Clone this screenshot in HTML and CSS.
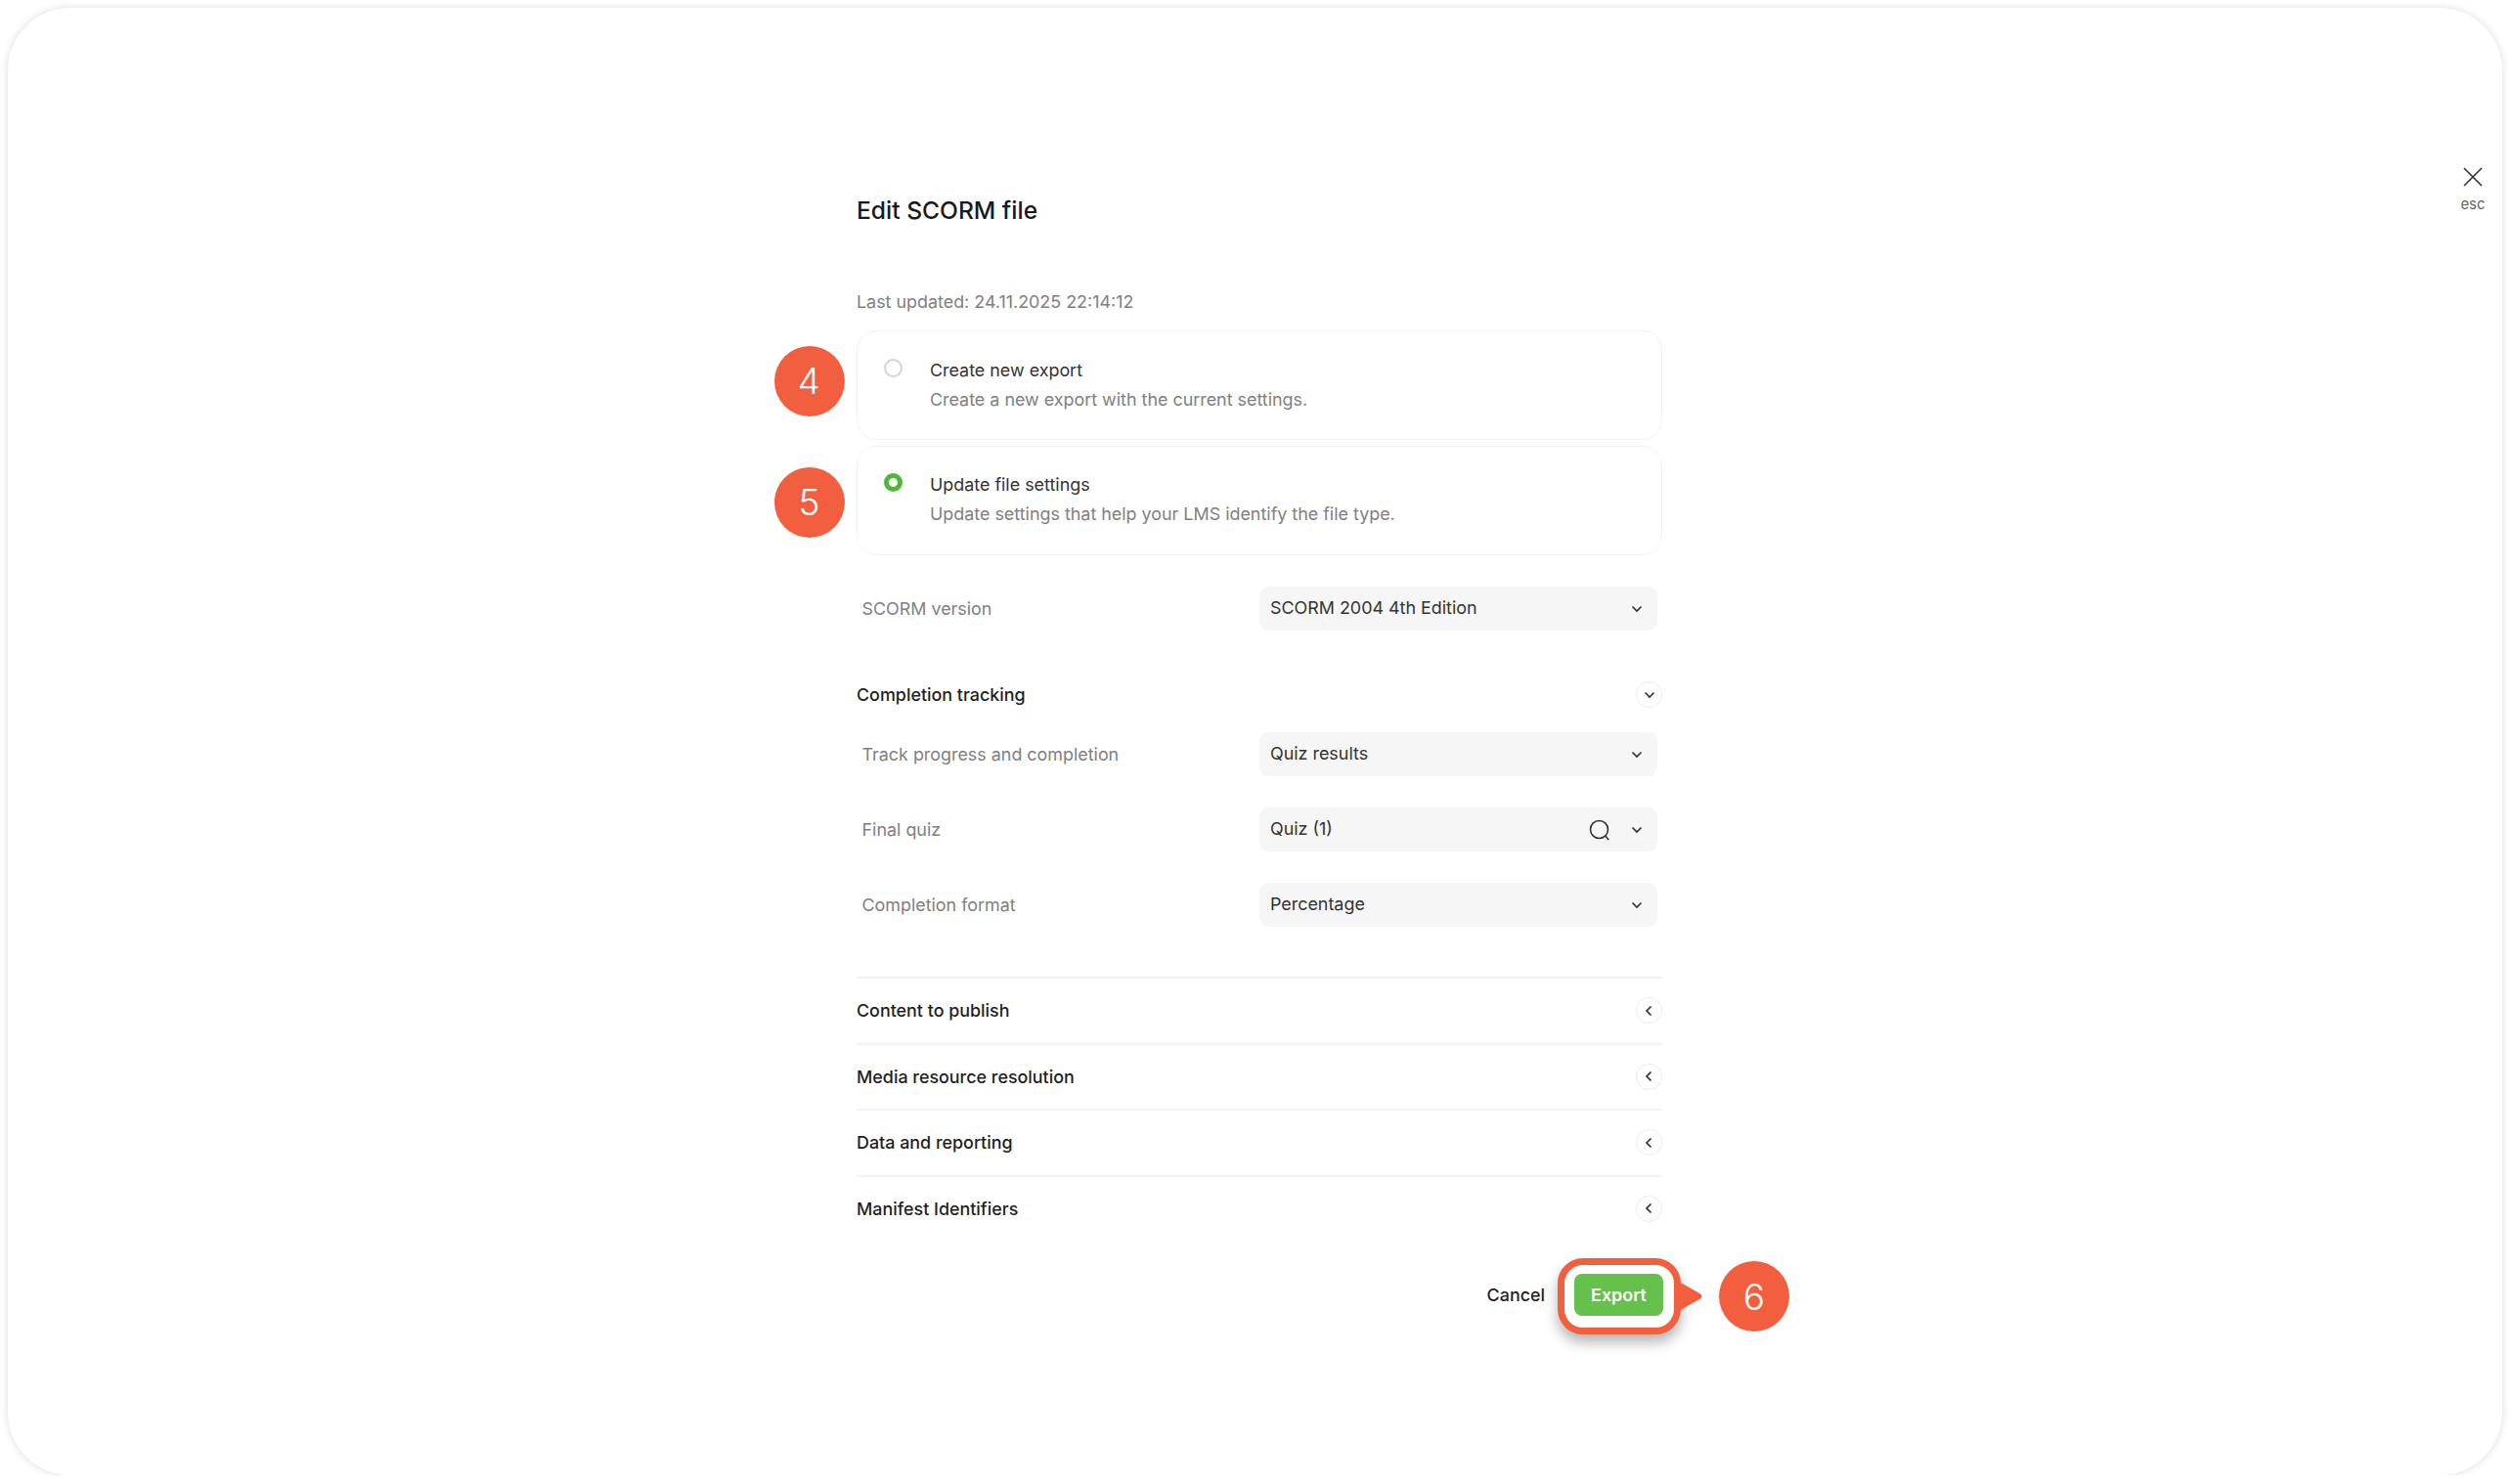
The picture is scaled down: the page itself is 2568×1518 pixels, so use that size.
FILE: index.html
```html
<!DOCTYPE html>
<html lang="en">

<head>
    <meta charset="UTF-8" />
    <title>Edit SCORM file</title>
    <link rel="stylesheet" href="styles.css">
</head>

<body>
    <div class="frame">
        <div class="close">
            <svg width="20" height="20" viewBox="0 0 20 20" fill="none" stroke="#333" stroke-width="1.6">
                <path d="M1 1l18 18M19 1L1 19" />
            </svg>
            <span>esc</span>
        </div>

        <div class="panel">
            <h2>Edit SCORM file</h2>
            <div class="updated">Last updated: 24.11.2025 22:14:12</div>

            <div class="option">
                <div class="badge badge-side">4</div>
                <div class="radio"></div>
                <div>
                    <div class="option-title">Create new export</div>
                    <div class="option-desc">Create a new export with the current settings.</div>
                </div>
            </div>
            <div class="option option-second">
                <div class="badge badge-side">5</div>
                <div class="radio radio-on"></div>
                <div>
                    <div class="option-title">Update file settings</div>
                    <div class="option-desc">Update settings that help your LMS identify the file type.</div>
                </div>
            </div>

            <div class="field field-version">
                <div class="field-label">SCORM version</div>
                <div class="select">
                    <span class="select-value">SCORM 2004 4th Edition</span>
                    <svg class="chev" width="12" height="8" viewBox="0 0 12 8" fill="none" stroke="#333" stroke-width="1.7">
                        <path d="M1.5 1.5L6 6l4.5-4.5" />
                    </svg>
                </div>
            </div>

            <div class="section-head">
                <span class="section-title">Completion tracking</span>
                <div class="toggle">
                    <svg width="12" height="8" viewBox="0 0 12 8" fill="none" stroke="#333" stroke-width="1.7">
                        <path d="M1.5 1.5L6 6l4.5-4.5" />
                    </svg>
                </div>
            </div>

            <div class="fields">
                <div class="field">
                    <div class="field-label">Track progress and completion</div>
                    <div class="select">
                        <span class="select-value">Quiz results</span>
                        <svg class="chev" width="12" height="8" viewBox="0 0 12 8" fill="none" stroke="#333" stroke-width="1.7">
                            <path d="M1.5 1.5L6 6l4.5-4.5" />
                        </svg>
                    </div>
                </div>
                <div class="field">
                    <div class="field-label">Final quiz</div>
                    <div class="select">
                        <span class="select-value">Quiz (1)</span>
                        <svg class="search" width="22" height="22" viewBox="0 0 22 22" fill="none" stroke="#333" stroke-width="1.6">
                            <circle cx="10.5" cy="10.5" r="9" />
                            <path d="M16.8 17l3.4 4" />
                        </svg>
                        <svg class="chev" width="12" height="8" viewBox="0 0 12 8" fill="none" stroke="#333" stroke-width="1.7">
                            <path d="M1.5 1.5L6 6l4.5-4.5" />
                        </svg>
                    </div>
                </div>
                <div class="field">
                    <div class="field-label">Completion format</div>
                    <div class="select">
                        <span class="select-value">Percentage</span>
                        <svg class="chev" width="12" height="8" viewBox="0 0 12 8" fill="none" stroke="#333" stroke-width="1.7">
                            <path d="M1.5 1.5L6 6l4.5-4.5" />
                        </svg>
                    </div>
                </div>
            </div>

            <div class="sections">
                <div class="section-row">
                    <span class="section-title">Content to publish</span>
                    <div class="toggle">
                        <svg width="8" height="12" viewBox="0 0 8 12" fill="none" stroke="#333" stroke-width="1.7">
                            <path d="M5.5 1.5L1 6l4.5 4.5" />
                        </svg>
                    </div>
                </div>
                <div class="section-row">
                    <span class="section-title">Media resource resolution</span>
                    <div class="toggle">
                        <svg width="8" height="12" viewBox="0 0 8 12" fill="none" stroke="#333" stroke-width="1.7">
                            <path d="M5.5 1.5L1 6l4.5 4.5" />
                        </svg>
                    </div>
                </div>
                <div class="section-row">
                    <span class="section-title">Data and reporting</span>
                    <div class="toggle">
                        <svg width="8" height="12" viewBox="0 0 8 12" fill="none" stroke="#333" stroke-width="1.7">
                            <path d="M5.5 1.5L1 6l4.5 4.5" />
                        </svg>
                    </div>
                </div>
                <div class="section-row">
                    <span class="section-title">Manifest Identifiers</span>
                    <div class="toggle">
                        <svg width="8" height="12" viewBox="0 0 8 12" fill="none" stroke="#333" stroke-width="1.7">
                            <path d="M5.5 1.5L1 6l4.5 4.5" />
                        </svg>
                    </div>
                </div>
            </div>

            <div class="actions">
                <span class="cancel">Cancel</span>
                <div class="export-wrap">
                    <div class="ring"></div>
                    <svg class="pointer" width="25" height="30" viewBox="0 0 25 30">
                        <path d="M0 0l22 12.5q3 2.5 0 5L0 30z" fill="#f15f3f" />
                    </svg>
                    <button class="export-btn">Export</button>
                    <div class="badge badge-export">6</div>
                </div>
            </div>
        </div>
    </div>
</body>

</html>
```

FILE: styles.css
```css
* {
    box-sizing: border-box;
}

body {
    margin: 0;
    font-family: Inter, 'Noto Sans', sans-serif;
    background-color: #fff;
    color: #1f1f1f;
}

.frame {
    position: relative;
    margin: 8px 9px 0 8px;
    height: 1501px;
    padding: 191px 0 0 868px;
    background: #fff;
    border-radius: 64px;
    box-shadow: 0 0 8px rgba(0, 0, 0, 0.14);
}

.close {
    position: absolute;
    top: 163px;
    right: 10px;
    width: 40px;
    display: flex;
    flex-direction: column;
    align-items: center;
    gap: 9px;
    font-size: 15px;
    line-height: 18px;
    color: #666;
}

.panel {
    width: 824px;
}

.panel h2 {
    margin: 0;
    font-size: 24.6px;
    line-height: 32px;
    font-weight: 500;
    color: #1a1a1a;
}

.updated {
    margin-top: 66px;
    font-size: 17.9px;
    line-height: 24px;
    color: #808080;
}

.option {
    position: relative;
    display: flex;
    gap: 28px;
    height: 112px;
    margin-top: 17px;
    padding: 28px 27px 0;
    border: 1.5px solid #f3f3f3;
    border-radius: 20px;
}

.option-second {
    margin-top: 6px;
    padding-top: 27px;
}

.radio {
    width: 19px;
    height: 19px;
    flex: none;
    border: 2px solid #d4d4d4;
    border-radius: 50%;
}

.radio-on {
    border: 5px solid #4fb738;
}

.option-title {
    font-size: 17.9px;
    line-height: 24px;
    color: #333;
}

.option-desc {
    margin-top: 6px;
    font-size: 17.9px;
    line-height: 24px;
    color: #808080;
}

.badge {
    width: 72px;
    height: 72px;
    border-radius: 50%;
    background-color: #f15f3f;
    color: #fff;
    font-size: 37px;
    font-weight: 300;
    display: flex;
    align-items: center;
    justify-content: center;
}

.badge-side {
    position: absolute;
    left: -85.5px;
    top: 14.5px;
}

.option-second .badge-side {
    top: 20.5px;
}

.field {
    display: flex;
    align-items: center;
    justify-content: space-between;
    padding: 0 5px 0 5.5px;
}

.field-version {
    margin-top: 32px;
}

.field-label {
    font-size: 17.9px;
    color: #808080;
}

.select {
    width: 407px;
    height: 45px;
    display: flex;
    align-items: center;
    padding: 0 15px 0 11px;
    background-color: #f6f6f6;
    border-radius: 9px;
    font-size: 17.9px;
    color: #333;
}

.select-value {
    flex: 1;
    margin-top: -2px;
}

.search {
    margin-right: 21px;
}

.section-head {
    display: flex;
    align-items: center;
    justify-content: space-between;
    margin-top: 52px;
}

.section-title {
    font-size: 17.9px;
    font-weight: 500;
    color: #1f1f1f;
}

.toggle {
    width: 27px;
    height: 27px;
    display: flex;
    align-items: center;
    justify-content: center;
    border: 1.5px solid #ebebeb;
    border-radius: 50%;
}

.fields {
    display: flex;
    flex-direction: column;
    gap: 32px;
    margin-top: 25px;
}

.sections {
    margin-top: 51px;
}

.section-row {
    display: flex;
    align-items: center;
    justify-content: space-between;
    height: 67.5px;
    border-top: 2px solid #f4f4f4;
}

.actions {
    display: flex;
    align-items: center;
    justify-content: flex-end;
    gap: 30px;
    margin: 34px -1px 0 0;
}

.cancel {
    font-size: 17.9px;
    font-weight: 500;
}

.export-wrap {
    position: relative;
}

.ring {
    position: absolute;
    inset: -16px -18px -19px -17px;
    background-color: #fff;
    border: 7px solid #f15f3f;
    border-radius: 26px;
    box-shadow: 0 8px 14px rgba(0, 0, 0, 0.3);
}

.pointer {
    position: absolute;
    left: 107px;
    top: 8px;
}

.export-btn {
    position: relative;
    display: block;
    width: 91px;
    height: 43px;
    padding: 0;
    border: none;
    border-radius: 8px;
    background-color: #65c14c;
    color: #fff;
    font-family: inherit;
    font-size: 17.9px;
    font-weight: 600;
}

.badge-export {
    position: absolute;
    left: 148px;
    top: -13px;
}
```
